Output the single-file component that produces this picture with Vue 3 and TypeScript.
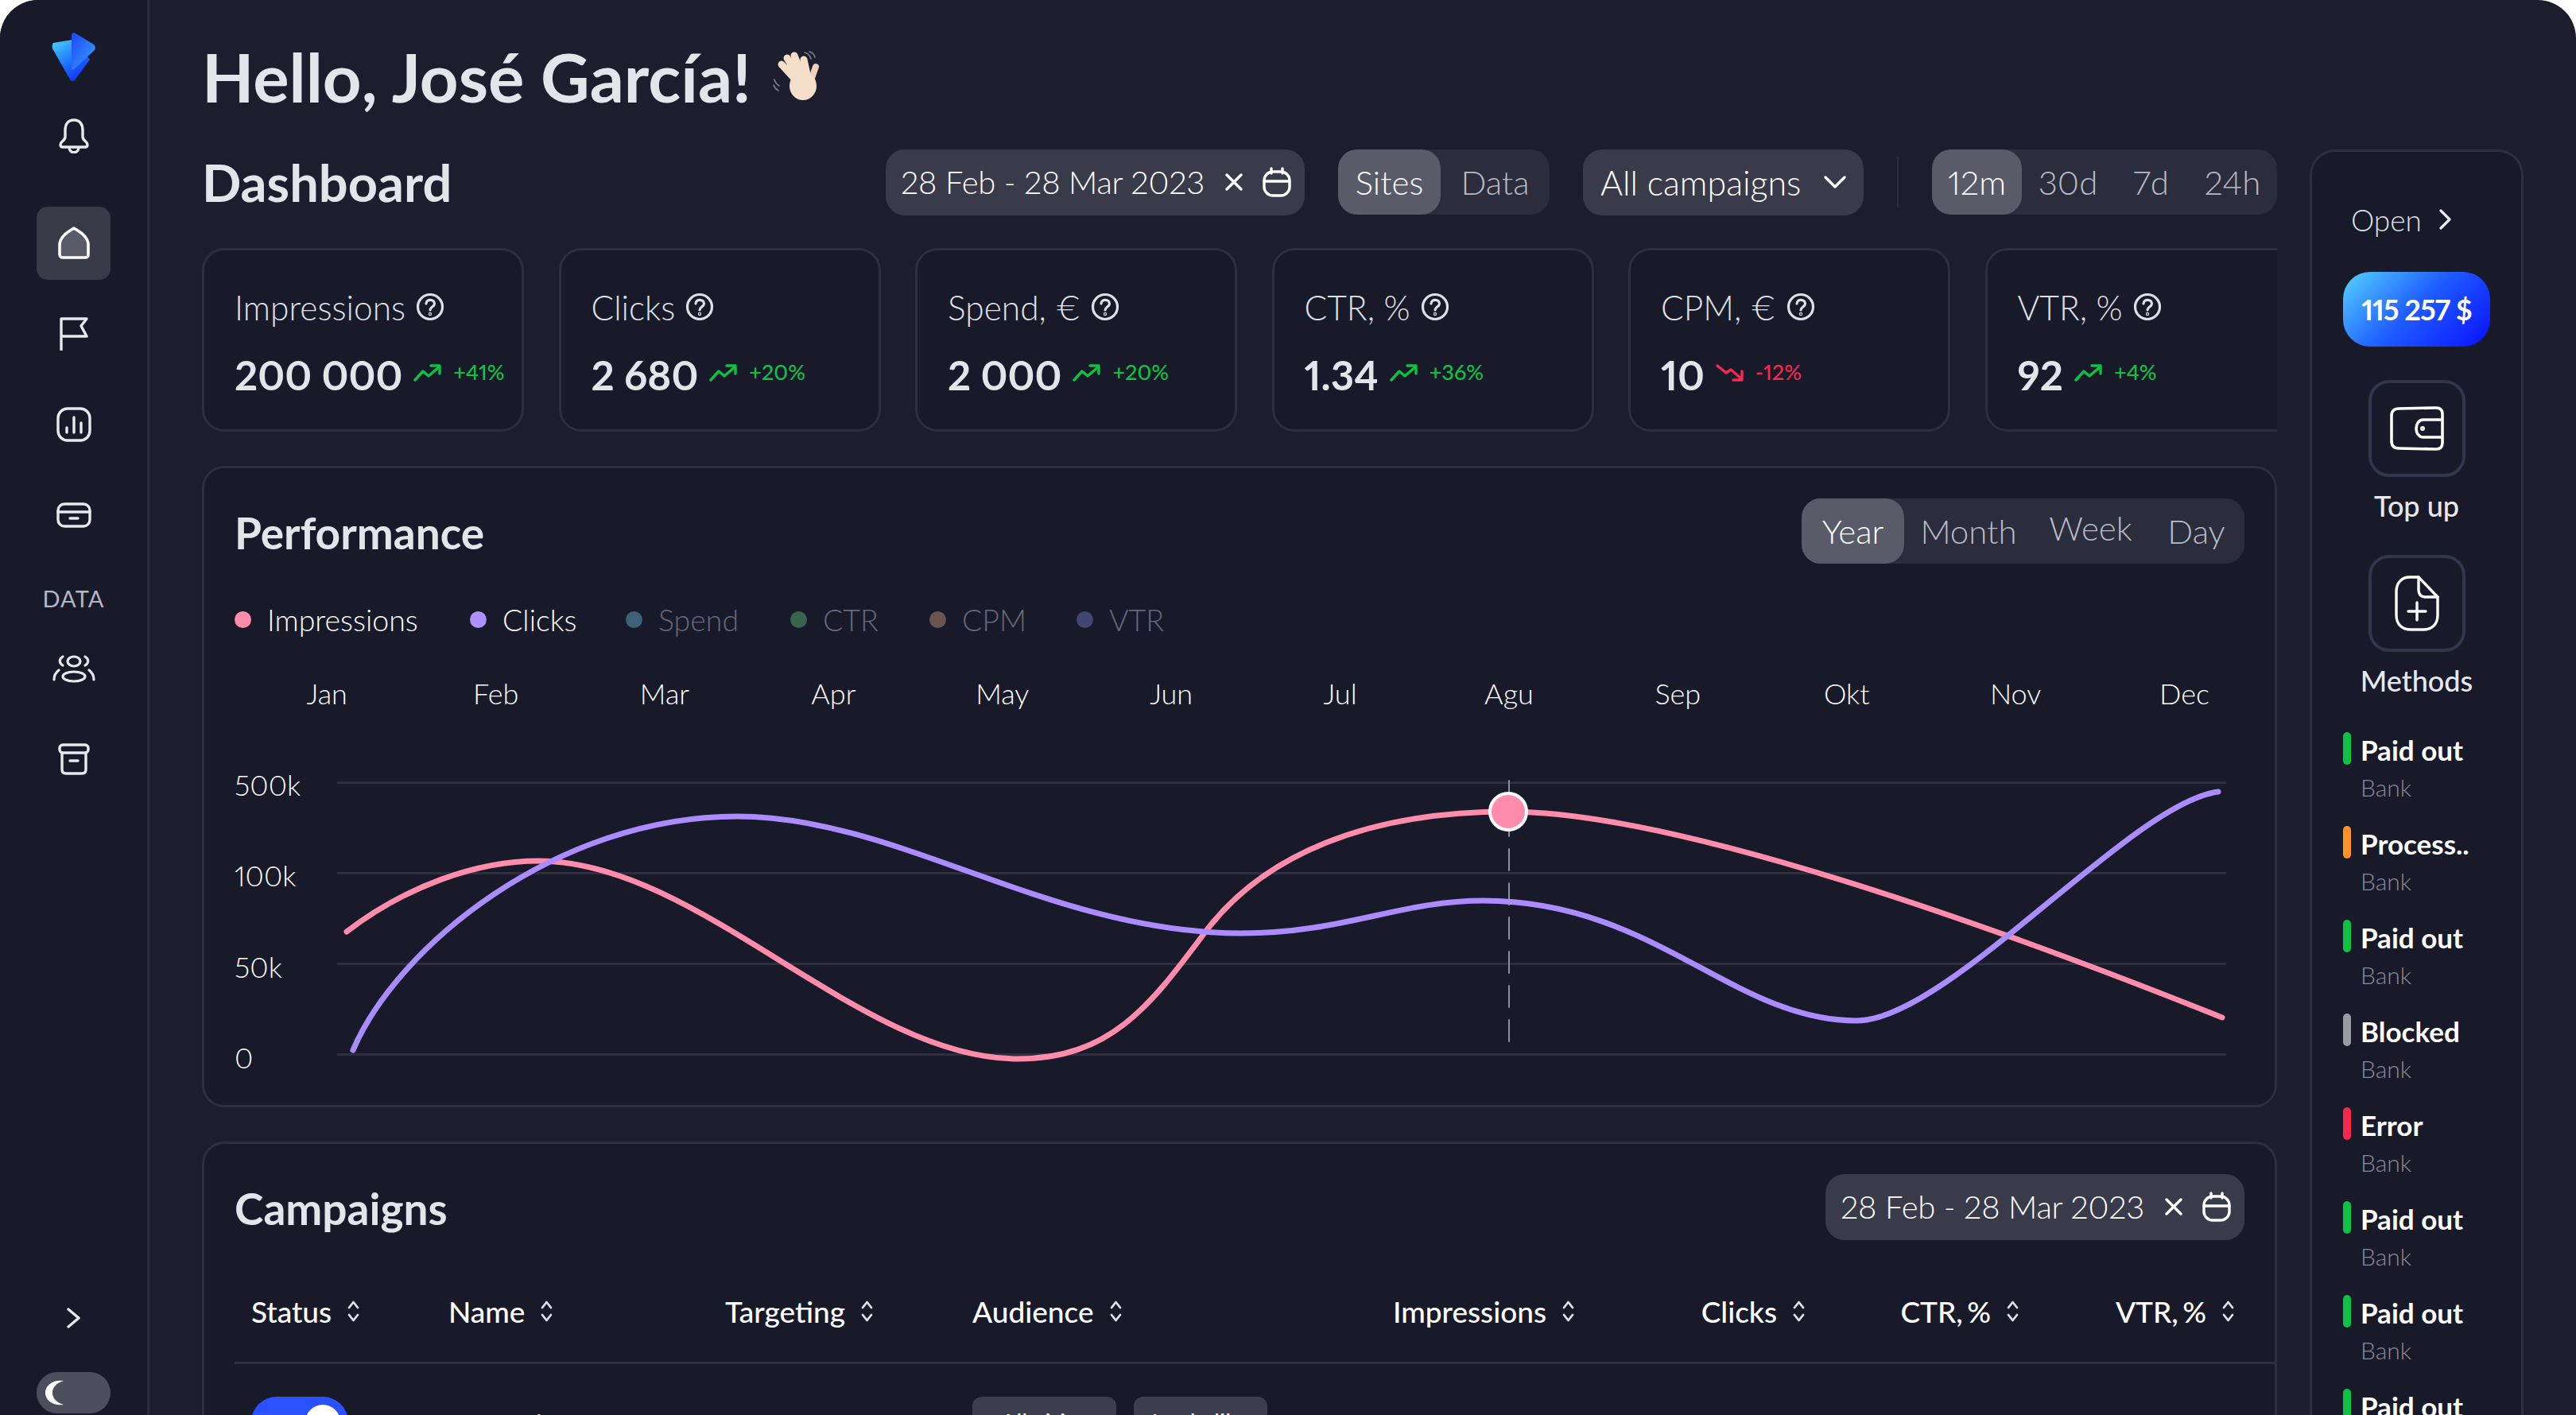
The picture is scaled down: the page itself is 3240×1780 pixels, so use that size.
<script setup lang="ts">
interface Stat {
  label: string;
  value: string;
  delta: string;
  down?: boolean;
}

const stats: Stat[] = [
  { label: "Impressions", value: "200 000", delta: "+41%" },
  { label: "Clicks", value: "2 680", delta: "+20%" },
  { label: "Spend, €", value: "2 000", delta: "+20%" },
  { label: "CTR, %", value: "1.34", delta: "+36%" },
  { label: "CPM, €", value: "10", delta: "-12%", down: true },
  { label: "VTR, %", value: "92", delta: "+4%" },
];
const legend = [
  { name: "Impressions", color: "#ff8cab", on: true, width: 296 },
  { name: "Clicks", color: "#b18fff", on: true, width: 196 },
  { name: "Spend", color: "#3f6178", on: false, width: 207 },
  { name: "CTR", color: "#36644f", on: false, width: 175 },
  { name: "CPM", color: "#6b5550", on: false, width: 185 },
  { name: "VTR", color: "#404670", on: false, width: 110 },
];
const months = ["Jan", "Feb", "Mar", "Apr", "May", "Jun", "Jul", "Agu", "Sep", "Okt", "Nov", "Dec"];
const yLabels = ["500k", "100k", "50k", "0"];
const payments = [
  { name: "Paid out", color: "#0dc143" },
  { name: "Process..", color: "#ff9227" },
  { name: "Paid out", color: "#0dc143" },
  { name: "Blocked", color: "#9a9ca5" },
  { name: "Error", color: "#f5284f" },
  { name: "Paid out", color: "#0dc143" },
  { name: "Paid out", color: "#0dc143" },
  { name: "Paid out", color: "#0dc143" },
];
const columns = [
  { name: "Status" },
  { name: "Name" },
  { name: "Targeting" },
  { name: "Audience" },
  { name: "Impressions", num: true },
  { name: "Clicks", num: true },
  { name: "CTR, %", num: true },
  { name: "VTR, %", num: true },
];

// curves are in page pixels, the svg viewBox starts at the plot's corner
const pinkPath =
  "M436 1172 C510 1115 600 1083 677 1083 C880 1083 1080 1332 1280 1332 C1400 1332 1450 1260 1517 1171 C1590 1075 1720 1021 1897 1021 C2080 1021 2420 1130 2795 1280";
const purplePath =
  "M444 1321 C500 1190 700 1027 927 1027 C1130 1027 1320 1174 1561 1174 C1690 1174 1760 1133 1866 1133 C2080 1133 2180 1284 2335 1284 C2450 1284 2680 1010 2790 996";
</script>

<template>
  <div class="app">
    <aside class="side">
      <svg class="logo" viewBox="0 0 55 62" width="55" height="62">
        <defs>
          <linearGradient id="lg1" x1="0" y1="0" x2="0.6" y2="1">
            <stop offset="0" stop-color="#4fd2ff" />
            <stop offset="0.55" stop-color="#1f7bff" />
            <stop offset="1" stop-color="#1233f0" />
          </linearGradient>
          <linearGradient id="lg2" x1="0" y1="0" x2="1" y2="1">
            <stop offset="0" stop-color="#1c46f5" />
            <stop offset="1" stop-color="#38a4ff" />
          </linearGradient>
        </defs>
        <path d="M2 13 L26 9 L48 34 L29 60 Q26 63 23 59 L1 20 Q0 15 2 13Z" fill="url(#lg1)" />
        <path d="M25 3 Q26 -1 30 1 L53 15 Q56 18 54 22 L28 46 Q25 48 25 44Z" fill="url(#lg2)" />
      </svg>

      <div class="nav-item">
        <svg width="38" height="44" viewBox="0 0 38 44" fill="none" stroke="#e8e9ef" stroke-width="3.4" stroke-linejoin="round">
          <path d="M19 2 C11 2 8 8 8 15 V23 C8 28 2 29 2 33 C2 35 3 36 5 36 H33 C35 36 36 35 36 33 C36 29 30 28 30 23 V15 C30 8 27 2 19 2Z" />
          <path d="M13 36 C13 45 25 45 25 36" />
        </svg>
      </div>
      <div class="nav-item active">
        <svg width="42" height="42" viewBox="0 0 42 42" fill="#5a5b69" stroke="#fff" stroke-width="3.6" stroke-linejoin="round">
          <path d="M21 2 C27 6 39 12 39 23 V35 Q39 39 35 39 H7 Q3 39 3 35 V23 C3 12 15 6 21 2Z" />
        </svg>
      </div>
      <div class="nav-item">
        <svg width="38" height="42" viewBox="0 0 38 42" fill="none" stroke="#e8e9ef" stroke-width="3.4" stroke-linejoin="round" stroke-linecap="round">
          <path d="M3 41 V2 H35 L28 11 L35 24 H3" />
        </svg>
      </div>
      <div class="nav-item">
        <svg width="44" height="44" viewBox="0 0 44 44" fill="none" stroke="#e8e9ef" stroke-width="3.4" stroke-linecap="round">
          <rect x="2" y="2" width="40" height="40" rx="12" />
          <path d="M13 32 V26 M22 32 V13 M31 32 V20" />
        </svg>
      </div>
      <div class="nav-item">
        <svg width="44" height="32" viewBox="0 0 44 32" fill="none" stroke="#e8e9ef" stroke-width="3.4" stroke-linecap="round">
          <rect x="2" y="2" width="40" height="28" rx="8" />
          <path d="M2 12 H42 M17 20 H27" />
        </svg>
      </div>
      <div class="side-label">DATA</div>
      <div class="nav-item">
        <svg width="54" height="36" viewBox="0 0 54 36" fill="none" stroke="#e8e9ef" stroke-width="3.2" stroke-linecap="round">
          <ellipse cx="27" cy="9" rx="8" ry="6" />
          <ellipse cx="27" cy="28" rx="14" ry="6" />
          <path d="M13 3 C8 6 8 11 13 14 M41 3 C46 6 46 11 41 14 M8 20 C4 23 2 26 2 32 M46 20 C50 23 52 26 52 32" />
        </svg>
      </div>
      <div class="nav-item">
        <svg width="40" height="40" viewBox="0 0 40 40" fill="none" stroke="#e8e9ef" stroke-width="3.4" stroke-linecap="round" stroke-linejoin="round">
          <rect x="2" y="2" width="36" height="10" rx="4" />
          <path d="M5 12 V33 Q5 38 10 38 H30 Q35 38 35 33 V12 M15 22 H25" />
        </svg>
      </div>

      <div class="nav-item push">
        <svg width="17" height="26" viewBox="0 0 17 26" fill="none" stroke="#e8e9ef" stroke-width="3.4" stroke-linecap="round" stroke-linejoin="round">
          <path d="M2 2 L15 13 L2 24" />
        </svg>
      </div>
      <div class="mode">
        <svg width="26" height="32" viewBox="0 0 26 32">
          <path d="M24 1 C10 -1 1 7 1 16 C1 25 10 33 24 31 C14 28 10 22 10 16 C10 10 14 4 24 1Z" fill="#fff" />
        </svg>
      </div>
    </aside>

    <main class="main">
      <h1 class="hello">
        Hello, José García!
        <svg class="wave" width="60" height="64" viewBox="0 0 60 64" fill="none" stroke-linecap="round">
          <path d="M32 40 L11 17 M34 36 L18 9 M38 34 L27 6 M44 34 L39 11" stroke="#f6dfca" stroke-width="9" />
          <path d="M47 40 L54 20" stroke="#efd2ba" stroke-width="8" />
          <ellipse cx="38" cy="44" rx="17" ry="18" fill="#f6dfca" />
          <path d="M40 2 C44 3 47 6 48 10 M46 1 C50 2 52 4 53 8 M2 36 C3 40 5 42 8 44 M1 43 C2 46 4 48 7 50" stroke="#7d7f8c" stroke-width="1.6" />
        </svg>
      </h1>

      <div class="body">
        <div class="content">
          <div class="toolbar">
            <h2 class="dash">Dashboard</h2>
            <div class="controls">
              <div class="chip date">
                <span class="chip-text">28 Feb - 28 Mar 2023</span>
                <svg class="x" width="24" height="22" viewBox="0 0 24 22" fill="none" stroke="#fff" stroke-width="3.4" stroke-linecap="round">
                  <path d="M3 2 L21 20 M21 2 L3 20" />
                </svg>
                <svg width="36" height="38" viewBox="0 0 36 38" fill="none" stroke="#fff" stroke-width="3.4" stroke-linecap="round">
                  <rect x="2" y="6" width="32" height="30" rx="11" />
                  <path d="M2 18 H34 M11 2 V8 M25 2 V8" />
                </svg>
              </div>
              <div class="seg">
                <span class="seg-item on" style="width: 129px">Sites</span>
                <span class="seg-item" style="width: 137px">Data</span>
              </div>
              <div class="chip drop">
                <span class="chip-text">All campaigns</span>
                <svg width="28" height="18" viewBox="0 0 28 18" fill="none" stroke="#fff" stroke-width="3.4" stroke-linecap="round" stroke-linejoin="round">
                  <path d="M2 3 L14 15 L26 3" />
                </svg>
              </div>
              <div class="vline"></div>
              <div class="seg">
                <span class="seg-item on" style="width: 113px">12m</span>
                <span class="seg-item" style="width: 116px">30d</span>
                <span class="seg-item" style="width: 93px">7d</span>
                <span class="seg-item" style="width: 112px">24h</span>
              </div>
            </div>
          </div>

          <div class="stats">
            <div v-for="s in stats" :key="s.label" class="stat">
              <div class="stat-label">
                {{ s.label }}
                <svg width="36" height="36" viewBox="0 0 36 36" fill="none" stroke="#dfe0e8" stroke-width="3.2" stroke-linecap="round">
                  <circle cx="18" cy="18" r="15.5" />
                  <path d="M13 14 C13 7.5 23.5 8 23.5 14 C23.5 18 18 18 18 22" />
                  <circle cx="18" cy="27" r="0.6" />
                </svg>
              </div>
              <div class="stat-row">
                <span class="stat-value">{{ s.value }}</span>
                <svg v-if="!s.down" width="36" height="22" viewBox="0 0 36 22" fill="none" stroke="#0dc143" stroke-width="3.4" stroke-linecap="round" stroke-linejoin="round">
                  <path d="M2 20 L12 9 L19 15 L33 3 M22 2 H33 V12" />
                </svg>
                <svg v-else width="36" height="22" viewBox="0 0 36 22" fill="none" stroke="#f5284f" stroke-width="3.4" stroke-linecap="round" stroke-linejoin="round">
                  <path d="M2 2 L13 11 L19 7 L33 19 M33 9 V20 H22" />
                </svg>
                <span class="stat-delta" :class="{ down: s.down }">{{ s.delta }}</span>
              </div>
            </div>
          </div>

          <section class="panel perf">
            <div class="panel-head">
              <h3 class="panel-title">Performance</h3>
              <div class="seg">
                <span class="seg-item on" style="width: 129px">Year</span>
                <span class="seg-item" style="width: 162px">Month</span>
                <span class="seg-item raised" style="width: 145px">Week</span>
                <span class="seg-item" style="width: 121px">Day</span>
              </div>
            </div>

            <div class="legend">
              <div v-for="l in legend" :key="l.name" class="legend-item" :class="{ off: !l.on }" :style="{ width: l.width + 'px' }">
                <i class="dot" :style="{ background: l.color }"></i>{{ l.name }}
              </div>
            </div>

            <div class="months">
              <span v-for="m in months" :key="m">{{ m }}</span>
            </div>

            <div class="plot">
              <div v-for="y in yLabels" :key="y" class="plot-row">
                <span class="plot-label">{{ y }}</span>
                <div class="plot-line"></div>
              </div>
              <svg class="curves" viewBox="295 927 2565 457" fill="none" stroke-linecap="round">
                <line x1="1898" y1="982" x2="1898" y2="1326" stroke="#8f909c" stroke-width="2" stroke-dasharray="27 16" />
                <path :d="pinkPath" stroke="#ff8cab" stroke-width="7" />
                <path :d="purplePath" stroke="#ab8cff" stroke-width="7" />
                <circle cx="1897" cy="1021" r="23" fill="#ff8cab" stroke="#fff" stroke-width="4" />
              </svg>
            </div>
          </section>

          <section class="panel camp">
            <div class="panel-head">
              <h3 class="panel-title">Campaigns</h3>
              <div class="chip date">
                <span class="chip-text">28 Feb - 28 Mar 2023</span>
                <svg class="x" width="24" height="22" viewBox="0 0 24 22" fill="none" stroke="#fff" stroke-width="3.4" stroke-linecap="round">
                  <path d="M3 2 L21 20 M21 2 L3 20" />
                </svg>
                <svg width="36" height="38" viewBox="0 0 36 38" fill="none" stroke="#fff" stroke-width="3.4" stroke-linecap="round">
                  <rect x="2" y="6" width="32" height="30" rx="11" />
                  <path d="M2 18 H34 M11 2 V8 M25 2 V8" />
                </svg>
              </div>
            </div>

            <div class="table">
              <div class="thead">
                <div v-for="c in columns" :key="c.name" class="th" :class="{ num: c.num }">
                  {{ c.name }}
                  <svg width="19" height="27" viewBox="0 0 19 27" fill="none" stroke="#dfe0e8" stroke-width="2.8" stroke-linecap="round" stroke-linejoin="round">
                    <path d="M4 9 L9.5 2 L15 9 M4 18 L9.5 25 L15 18" />
                  </svg>
                </div>
              </div>
              <div class="tr">
                <div><span class="switch"><i></i></span></div>
                <div class="td-text">Campaign</div>
                <div></div>
                <div class="tags"><span style="width: 181px">All cities</span><span style="width: 168px">Lookalike</span></div>
                <div class="td-num">200 000</div>
                <div class="td-num">2 174</div>
                <div class="td-num">0.74</div>
                <div class="td-num">90</div>
              </div>
            </div>
          </section>
        </div>

        <aside class="wallet">
          <div class="open">
            Open
            <svg width="16" height="26" viewBox="0 0 16 26" fill="none" stroke="#e8e9ef" stroke-width="3.2" stroke-linecap="round" stroke-linejoin="round">
              <path d="M3 2 L14 13 L3 24" />
            </svg>
          </div>
          <div class="balance">115 257 $</div>
          <div class="act">
            <svg width="68" height="56" viewBox="0 0 68 56" fill="none" stroke="#fff" stroke-width="3.6" stroke-linejoin="round">
              <path d="M2 12 Q2 3 11 3 L58 2 Q66 2 66 10 V46 Q66 54 58 54 L11 53 Q2 53 2 44Z" />
              <path d="M66 17 H42 C30 17 30 39 42 39 H66" />
              <circle cx="41" cy="28" r="1.2" />
            </svg>
          </div>
          <div class="act-label">Top up</div>
          <div class="act second">
            <svg width="56" height="70" viewBox="0 0 56 70" fill="none" stroke="#fff" stroke-width="3.4" stroke-linejoin="round" stroke-linecap="round">
              <path d="M19 2 H30 L54 27 V50 C54 62 46 68 36 68 H20 C10 68 2 62 2 50 V20 C2 9 9 2 19 2Z" />
              <path d="M30 2 V18 Q30 27 39 27 H54" />
              <path d="M28 34 V56 M17 45 H39" />
            </svg>
          </div>
          <div class="act-label">Methods</div>
          <ul class="pays">
            <li v-for="(p, i) in payments" :key="i" class="pay">
              <i class="bar" :style="{ background: p.color }"></i>
              <div>
                <div class="pay-name">{{ p.name }}</div>
                <div class="pay-sub">Bank</div>
              </div>
            </li>
          </ul>
        </aside>
      </div>
    </main>
  </div>
</template>

<style>
html,
body {
  margin: 0;
  background: #fff;
}
</style>

<style scoped>
* {
  box-sizing: border-box;
}
.app {
  display: flex;
  height: 1780px;
  overflow: hidden;
  border-radius: 48px 48px 0 0;
  background: #1c1e2d;
  font-family: Lato, "Open Sans", sans-serif;
  font-variant-numeric: proportional-nums;
  color: #fff;
}
.side {
  width: 188px;
  flex: none;
  display: flex;
  flex-direction: column;
  align-items: center;
  gap: 22px;
  padding: 41px 0 2px;
  background: #181a2a;
  border-right: 3px solid #2a2c3c;
}
.logo {
  flex: none;
}
.nav-item {
  width: 93px;
  height: 92px;
  flex: none;
  display: flex;
  align-items: center;
  justify-content: center;
  border-radius: 14px;
}
.nav-item.active {
  background: #383a48;
  margin-top: 21px;
}
.side-label {
  height: 40px;
  line-height: 40px;
  margin-top: 17px;
  font-size: 29px;
  color: #b5b6c4;
  letter-spacing: 1px;
}
.push {
  margin-top: auto;
}
.mode {
  width: 93px;
  height: 52px;
  flex: none;
  border-radius: 26px;
  background: #4e4f5e;
  display: flex;
  align-items: center;
  padding-left: 10px;
}
.main {
  flex: 1;
  min-width: 0;
  padding: 0 66px 0 66px;
}
.hello {
  margin: 0;
  padding-top: 46px;
  height: 146px;
  display: flex;
  align-items: center;
  gap: 27px;
  font-size: 85px;
  line-height: 96px;
  font-weight: 700;
  color: #e4e5ea;
  white-space: nowrap;
}
.wave {
  flex: none;
}
.body {
  display: flex;
  gap: 41px;
  margin-top: 42px;
}
.content {
  width: 2610px;
  flex: none;
}
.toolbar {
  display: flex;
  align-items: center;
  justify-content: space-between;
  height: 82px;
}
.dash {
  margin: 0;
  font-size: 65px;
  font-weight: 700;
  color: #e4e5ea;
}
.controls {
  display: flex;
  align-items: center;
  gap: 42px;
}
.chip {
  height: 83px;
  border-radius: 24px;
  background: #3a3b4a;
  display: flex;
  align-items: center;
  font-size: 40px;
  font-weight: 300;
  white-space: nowrap;
}
.chip.date {
  width: 527px;
  padding: 0 17px 0 19px;
}
.chip.date .chip-text {
  letter-spacing: -0.2px;
}
.chip.date .x {
  margin-left: auto;
  margin-right: 24px;
}
.chip.drop {
  width: 353px;
  padding: 0 22px;
  justify-content: space-between;
  font-size: 43px;
}
.seg {
  display: flex;
  height: 82px;
  border-radius: 24px;
  background: #2b2c3c;
  font-size: 42px;
  font-weight: 300;
  color: #b9bac7;
}
.seg-item {
  display: flex;
  align-items: center;
  justify-content: center;
  border-radius: 24px;
}
.seg-item.on {
  background: #5a5b69;
  color: #fff;
}
.seg-item.raised {
  padding-bottom: 9px;
}
.vline {
  width: 2px;
  height: 64px;
  background: #2b2d3d;
}
.stats {
  display: flex;
  gap: 43.5px;
  margin-top: 42px;
  overflow: hidden;
}
.stat {
  flex: none;
  width: 405px;
  height: 231px;
  padding: 46px 0 0 38px;
  background: #181a2a;
  border: 3px solid #2d2f3f;
  border-radius: 28px;
}
.stat-label {
  display: flex;
  align-items: center;
  gap: 13px;
  height: 50px;
  font-size: 42.5px;
  font-weight: 300;
  color: #dfe0e8;
}
.stat-row {
  display: flex;
  align-items: center;
  gap: 14px;
  height: 60px;
  margin-top: 30px;
}
.stat-value {
  font-size: 51px;
  font-weight: 700;
  color: #e4e5ea;
  white-space: nowrap;
}
.stat-row svg {
  margin-bottom: 4px;
}
.stat-delta {
  font-size: 27px;
  font-weight: 500;
  color: #0dc143;
  margin-bottom: 8px;
}
.stat-delta.down {
  color: #f5284f;
}
.panel {
  margin-top: 43px;
  padding: 38px 38px 6px;
  background: #181a2a;
  border: 3px solid #2d2f3f;
  border-radius: 28px;
}
.panel-head {
  display: flex;
  align-items: center;
  justify-content: space-between;
  height: 82px;
}
.panel-title {
  margin: 0;
  padding-top: 3px;
  font-size: 55px;
  font-weight: 700;
  color: #e4e5ea;
}
.legend {
  display: flex;
  align-items: center;
  height: 40px;
  margin-top: 50px;
  font-size: 37.5px;
  font-weight: 300;
}
.legend-item {
  display: flex;
  align-items: center;
  gap: 20px;
  flex: none;
}
.legend-item.off {
  color: #66687a;
}
.dot {
  width: 21px;
  height: 21px;
  border-radius: 50%;
}
.months {
  display: grid;
  grid-template-columns: repeat(12, 212.4px);
  height: 40px;
  margin-top: 53px;
  padding-left: 10px;
  font-size: 36px;
  line-height: 40px;
  font-weight: 300;
  text-align: center;
}
.plot {
  position: relative;
  margin: 35px -37px 0 0;
}
.plot-row {
  display: flex;
  align-items: center;
  height: 114.25px;
  padding-right: 60px;
}
.plot-label {
  width: 129px;
  flex: none;
  padding-top: 6px;
  font-size: 36px;
  font-weight: 300;
}
.plot-line {
  flex: 1;
  height: 3px;
  background: #2d2f3f;
}
.curves {
  position: absolute;
  left: 0;
  top: 0;
  width: 100%;
  height: 100%;
  overflow: visible;
}
.camp {
  padding-bottom: 60px;
}
.table {
  margin: 26px -38px 0 0;
}
.thead,
.tr {
  display: grid;
  grid-template-columns: 248px 348px 311px 417px 342px 290px 269px 271px;
  padding: 0 50px 0 21px;
}
.thead {
  align-items: center;
  height: 131px;
  border-bottom: 3px solid #2d2f3f;
}
.th {
  display: flex;
  align-items: center;
  gap: 18px;
  font-size: 37px;
  font-weight: 500;
  word-spacing: -4px;
  white-space: nowrap;
}
.th.num {
  justify-content: flex-end;
}
.tr {
  align-items: center;
  padding-top: 41px;
  font-size: 36px;
}
.td-text {
  padding-top: 6px;
}
.td-num {
  text-align: right;
  padding: 6px 37px 0 0;
}
.switch {
  display: flex;
  justify-content: flex-end;
  align-items: center;
  width: 122px;
  height: 64px;
  padding-right: 10px;
  border-radius: 32px;
  background: #2b50ff;
}
.switch i {
  width: 44px;
  height: 44px;
  border-radius: 50%;
  background: #fff;
}
.tags {
  display: flex;
  gap: 22px;
  font-size: 30px;
}
.tags span {
  height: 64px;
  line-height: 64px;
  text-align: center;
  border-radius: 12px;
  background: #3e3f4e;
}
.wallet {
  width: 269px;
  flex: none;
  display: flex;
  flex-direction: column;
  align-items: center;
  padding-top: 65px;
  background: #181a2a;
  border: 3px solid #2d2f3f;
  border-bottom: 0;
  border-radius: 32px 32px 0 0;
}
.open {
  width: 185px;
  height: 40px;
  padding-left: 10px;
  display: flex;
  align-items: center;
  gap: 21px;
  font-size: 37px;
  font-weight: 300;
  color: #dfe0e8;
}
.balance {
  width: 185px;
  height: 94px;
  margin-top: 46px;
  border-radius: 34px;
  background: linear-gradient(135deg, #56d4ff 0%, #1f5dff 48%, #0a10ff 100%);
  display: flex;
  align-items: center;
  justify-content: center;
  font-size: 36px;
  letter-spacing: -1px;
  font-weight: 700;
  white-space: nowrap;
}
.act {
  width: 122px;
  height: 122px;
  margin-top: 42px;
  border: 4px solid #33354a;
  border-radius: 26px;
  display: flex;
  align-items: center;
  justify-content: center;
}
.act.second {
  margin-top: 40px;
}
.act-label {
  height: 44px;
  line-height: 44px;
  margin-top: 14px;
  font-size: 36px;
  font-weight: 500;
  color: #e8e9ef;
  white-space: nowrap;
}
.pays {
  list-style: none;
  width: 185px;
  margin: 41px 0 0;
  padding: 0;
}
.pay {
  display: flex;
  gap: 12px;
  height: 118px;
}
.bar {
  width: 10px;
  height: 41px;
  margin-top: 2px;
  border-radius: 5px;
  flex: none;
}
.pay-name {
  height: 48px;
  line-height: 48px;
  font-size: 35px;
  font-weight: 700;
  white-space: nowrap;
}
.pay-sub {
  height: 46px;
  line-height: 46px;
  font-size: 30px;
  font-weight: 300;
  color: #8a8b96;
}
</style>
